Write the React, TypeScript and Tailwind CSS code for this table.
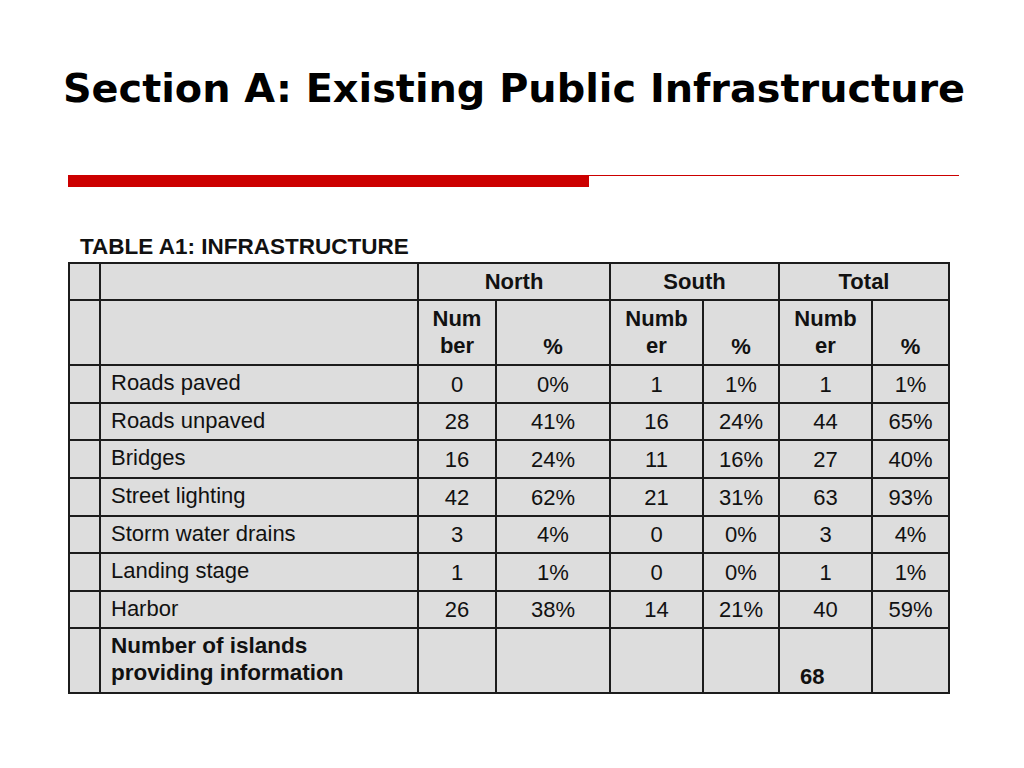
const rows: [string, string, string, string, string, string, string][] = [
  ["Roads paved", "0", "0%", "1", "1%", "1", "1%"],
  ["Roads unpaved", "28", "41%", "16", "24%", "44", "65%"],
  ["Bridges", "16", "24%", "11", "16%", "27", "40%"],
  ["Street lighting", "42", "62%", "21", "31%", "63", "93%"],
  ["Storm water drains", "3", "4%", "0", "0%", "3", "4%"],
  ["Landing stage", "1", "1%", "0", "0%", "1", "1%"],
  ["Harbor", "26", "38%", "14", "21%", "40", "59%"],
];

const rowHeights = ["h-[38px]", "h-[37px]", "h-[38px]", "h-[38px]", "h-[37px]", "h-[38px]", "h-[37px]"];

const cell = "border-2 border-[#1c1c1c] bg-[#dddddd] p-0";

export default function App() {
  return (
    <div className="h-[768px] w-[1024px] bg-white text-[#111]">
      <h1 className="pl-[4px] pt-[64px] text-center font-['DejaVu_Sans',sans-serif] text-[39.8px] font-bold leading-[48px] text-black">
        Section A: Existing Public Infrastructure
      </h1>

      {/* red rule under the title: thick bar then hairline */}
      <div className="ml-[68px] mt-[63px] flex w-[891px] items-start">
        <div className="h-[12px] w-[521px] bg-[#cc0000]" />
        <div className="h-px flex-1 bg-[#cc0000]" />
      </div>

      <div className="ml-[68px] mt-[45px] font-['Liberation_Sans',Arial,sans-serif]">
        <p className="pl-[12px] text-[22.5px] font-bold leading-[30px]">TABLE A1: INFRASTRUCTURE</p>
        <table className="w-[880px] table-fixed border-collapse text-[22px] leading-[27px]">
          <colgroup>
            <col className="w-[31px]" />
            <col className="w-[318px]" />
            <col className="w-[78px]" />
            <col className="w-[114px]" />
            <col className="w-[93px]" />
            <col className="w-[76px]" />
            <col className="w-[93px]" />
            <col className="w-[77px]" />
          </colgroup>
          <tbody>
            <tr className="h-[37px] font-bold">
              <td className={cell} />
              <td className={cell} />
              <td className={`${cell} text-center`} colSpan={2}>North</td>
              <td className={`${cell} text-center`} colSpan={2}>South</td>
              <td className={`${cell} text-center`} colSpan={2}>Total</td>
            </tr>
            <tr className="h-[65px] font-bold">
              <td className={cell} />
              <td className={cell} />
              <td className={`${cell} pt-[4px] text-center align-top`}>Num<br />ber</td>
              <td className={`${cell} pb-[4px] text-center align-bottom`}>%</td>
              <td className={`${cell} pt-[4px] text-center align-top`}>Numb<br />er</td>
              <td className={`${cell} pb-[4px] text-center align-bottom`}>%</td>
              <td className={`${cell} pt-[4px] text-center align-top`}>Numb<br />er</td>
              <td className={`${cell} pb-[4px] text-center align-bottom`}>%</td>
            </tr>
            {rows.map(([label, ...vals], i) => (
              <tr key={label} className={rowHeights[i]}>
                <td className={cell} />
                <td className={`${cell} px-[10px] pb-[3px]`}>{label}</td>
                {vals.map((v, j) => (
                  <td key={j} className={`${cell} text-center`}>{v}</td>
                ))}
              </tr>
            ))}
            <tr className="h-[65px] font-bold">
              <td className={cell} />
              <td className={`${cell} px-[10px] pb-[4px] text-[22.5px] leading-[27px]`}>
                Number of islands
                <br />
                providing information
              </td>
              <td className={cell} />
              <td className={cell} />
              <td className={cell} />
              <td className={cell} />
              <td className={`${cell} pb-[2px] pl-[20px] align-bottom text-[22px]`}>68</td>
              <td className={cell} />
            </tr>
          </tbody>
        </table>
      </div>
    </div>
  );
}
